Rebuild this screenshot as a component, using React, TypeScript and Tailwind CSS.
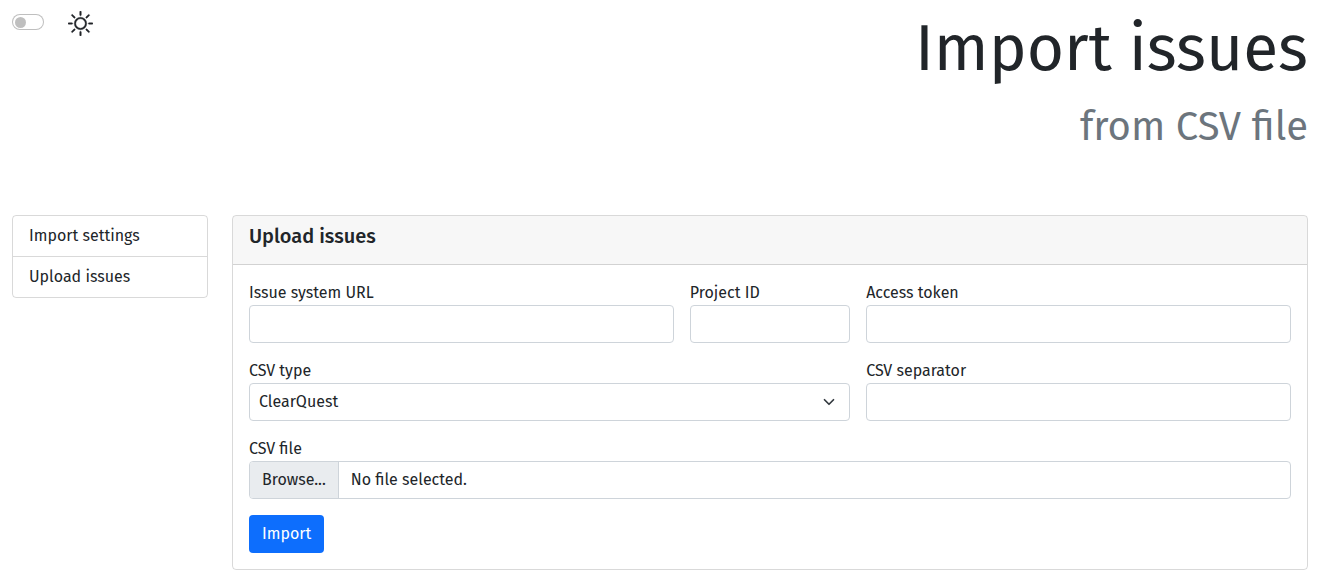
import { useState, type ReactNode } from "react";
import { BsSun } from "react-icons/bs";

const controlClass =
  "block h-[38px] w-full rounded border border-[#ced4da] bg-white px-3 text-base text-[#212529] outline-none focus:border-[#86b7fe] focus:ring-4 focus:ring-[#0d6efd]/25";

function Field({ id, label, span, children }: { id: string; label: string; span: string; children: ReactNode }) {
  return (
    <div className={span}>
      <label htmlFor={id} className="block">
        {label}
      </label>
      {children}
    </div>
  );
}

function Header() {
  return (
    <header className="flex items-start justify-between px-3">
      <div className="flex items-start gap-6 pt-[11px]">
        <input
          id="theme"
          type="checkbox"
          role="switch"
          className="mt-[3px] flex h-4 w-8 appearance-none items-center rounded-full border border-black/25 bg-white px-[2px] before:block before:size-[11px] before:rounded-full before:bg-black/25 checked:justify-end checked:border-[#0d6efd] checked:bg-[#0d6efd] checked:before:bg-white"
        />
        <label htmlFor="theme" aria-label="Light theme">
          <BsSun className="size-[25px] stroke-current stroke-[0.25]" />
        </label>
      </div>
      <div className="pt-[10px] text-right">
        <h1 className="text-[64px] leading-[78px]">Import issues</h1>
        <p className="pt-[15px] text-[40px] leading-[48px] text-[#6c757d]">from CSV file</p>
      </div>
    </header>
  );
}

function Sidebar() {
  return (
    <nav className="w-1/6 shrink-0 px-3">
      <div className="divide-y divide-black/15 rounded border border-black/15">
        <a href="#settings" className="block px-4 py-2">
          Import settings
        </a>
        <a href="#upload" className="block px-4 py-2">
          Upload issues
        </a>
      </div>
    </nav>
  );
}

function UploadForm() {
  const [fileName, setFileName] = useState("No file selected.");
  return (
    <form className="grid grid-cols-12 gap-4 p-4" onSubmit={(e) => e.preventDefault()}>
      <Field id="url" label="Issue system URL" span="col-span-5">
        <input id="url" type="text" className={controlClass} />
      </Field>
      <Field id="project" label="Project ID" span="col-span-2">
        <input id="project" type="text" className={controlClass} />
      </Field>
      <Field id="token" label="Access token" span="col-span-5">
        <input id="token" type="text" className={controlClass} />
      </Field>
      <Field id="type" label="CSV type" span="col-span-7">
        <div className="relative">
          <select
            id="type"
            className="block h-[38px] w-full appearance-none rounded border border-[#ced4da] bg-white pr-9 pl-[9px] text-base text-[#212529] outline-none focus:border-[#86b7fe] focus:ring-4 focus:ring-[#0d6efd]/25"
          >
            <option>ClearQuest</option>
          </select>
          <svg
            viewBox="0 0 16 16"
            className="pointer-events-none absolute top-[13px] right-[15px] size-3"
            fill="none"
            stroke="#343a40"
            strokeWidth="2.3"
            strokeLinecap="round"
            strokeLinejoin="round"
          >
            <path d="M2 5l6 6 6-6" />
          </svg>
        </div>
      </Field>
      <Field id="separator" label="CSV separator" span="col-span-5">
        <input id="separator" type="text" className={controlClass} />
      </Field>
      <Field id="file" label="CSV file" span="col-span-12">
        <div className="relative">
          <input
            id="file"
            type="file"
            className="peer sr-only"
            onChange={(e) => setFileName(e.target.files?.[0]?.name ?? "No file selected.")}
          />
          <label
            htmlFor="file"
            className="flex h-[38px] items-stretch overflow-hidden rounded border border-[#ced4da] leading-9 peer-focus:border-[#86b7fe] peer-focus:ring-4 peer-focus:ring-[#0d6efd]/25"
          >
            <span className="border-r border-[#ced4da] bg-[#e9ecef] px-3">Browse...</span>
            <span className="px-3">{fileName}</span>
          </label>
        </div>
      </Field>
      <div className="col-span-12">
        <button type="submit" className="h-[38px] rounded bg-[#0d6efd] px-[13px] text-white hover:bg-[#0b5ed7]">
          Import
        </button>
      </div>
    </form>
  );
}

export default function App() {
  return (
    <div className="bg-white pr-px pb-4 font-['Fira_Sans','Noto_Sans',sans-serif] text-base leading-6 text-[#212529]">
      <Header />
      <div className="flex items-start pt-16">
        <Sidebar />
        <main className="min-w-0 grow px-3">
          <section className="overflow-hidden rounded border border-black/15">
            <div className="border-b border-black/15 bg-black/[0.03] px-4 pt-2 pb-4">
              <h2 className="text-xl leading-6 font-medium">Upload issues</h2>
            </div>
            <UploadForm />
          </section>
        </main>
      </div>
    </div>
  );
}
